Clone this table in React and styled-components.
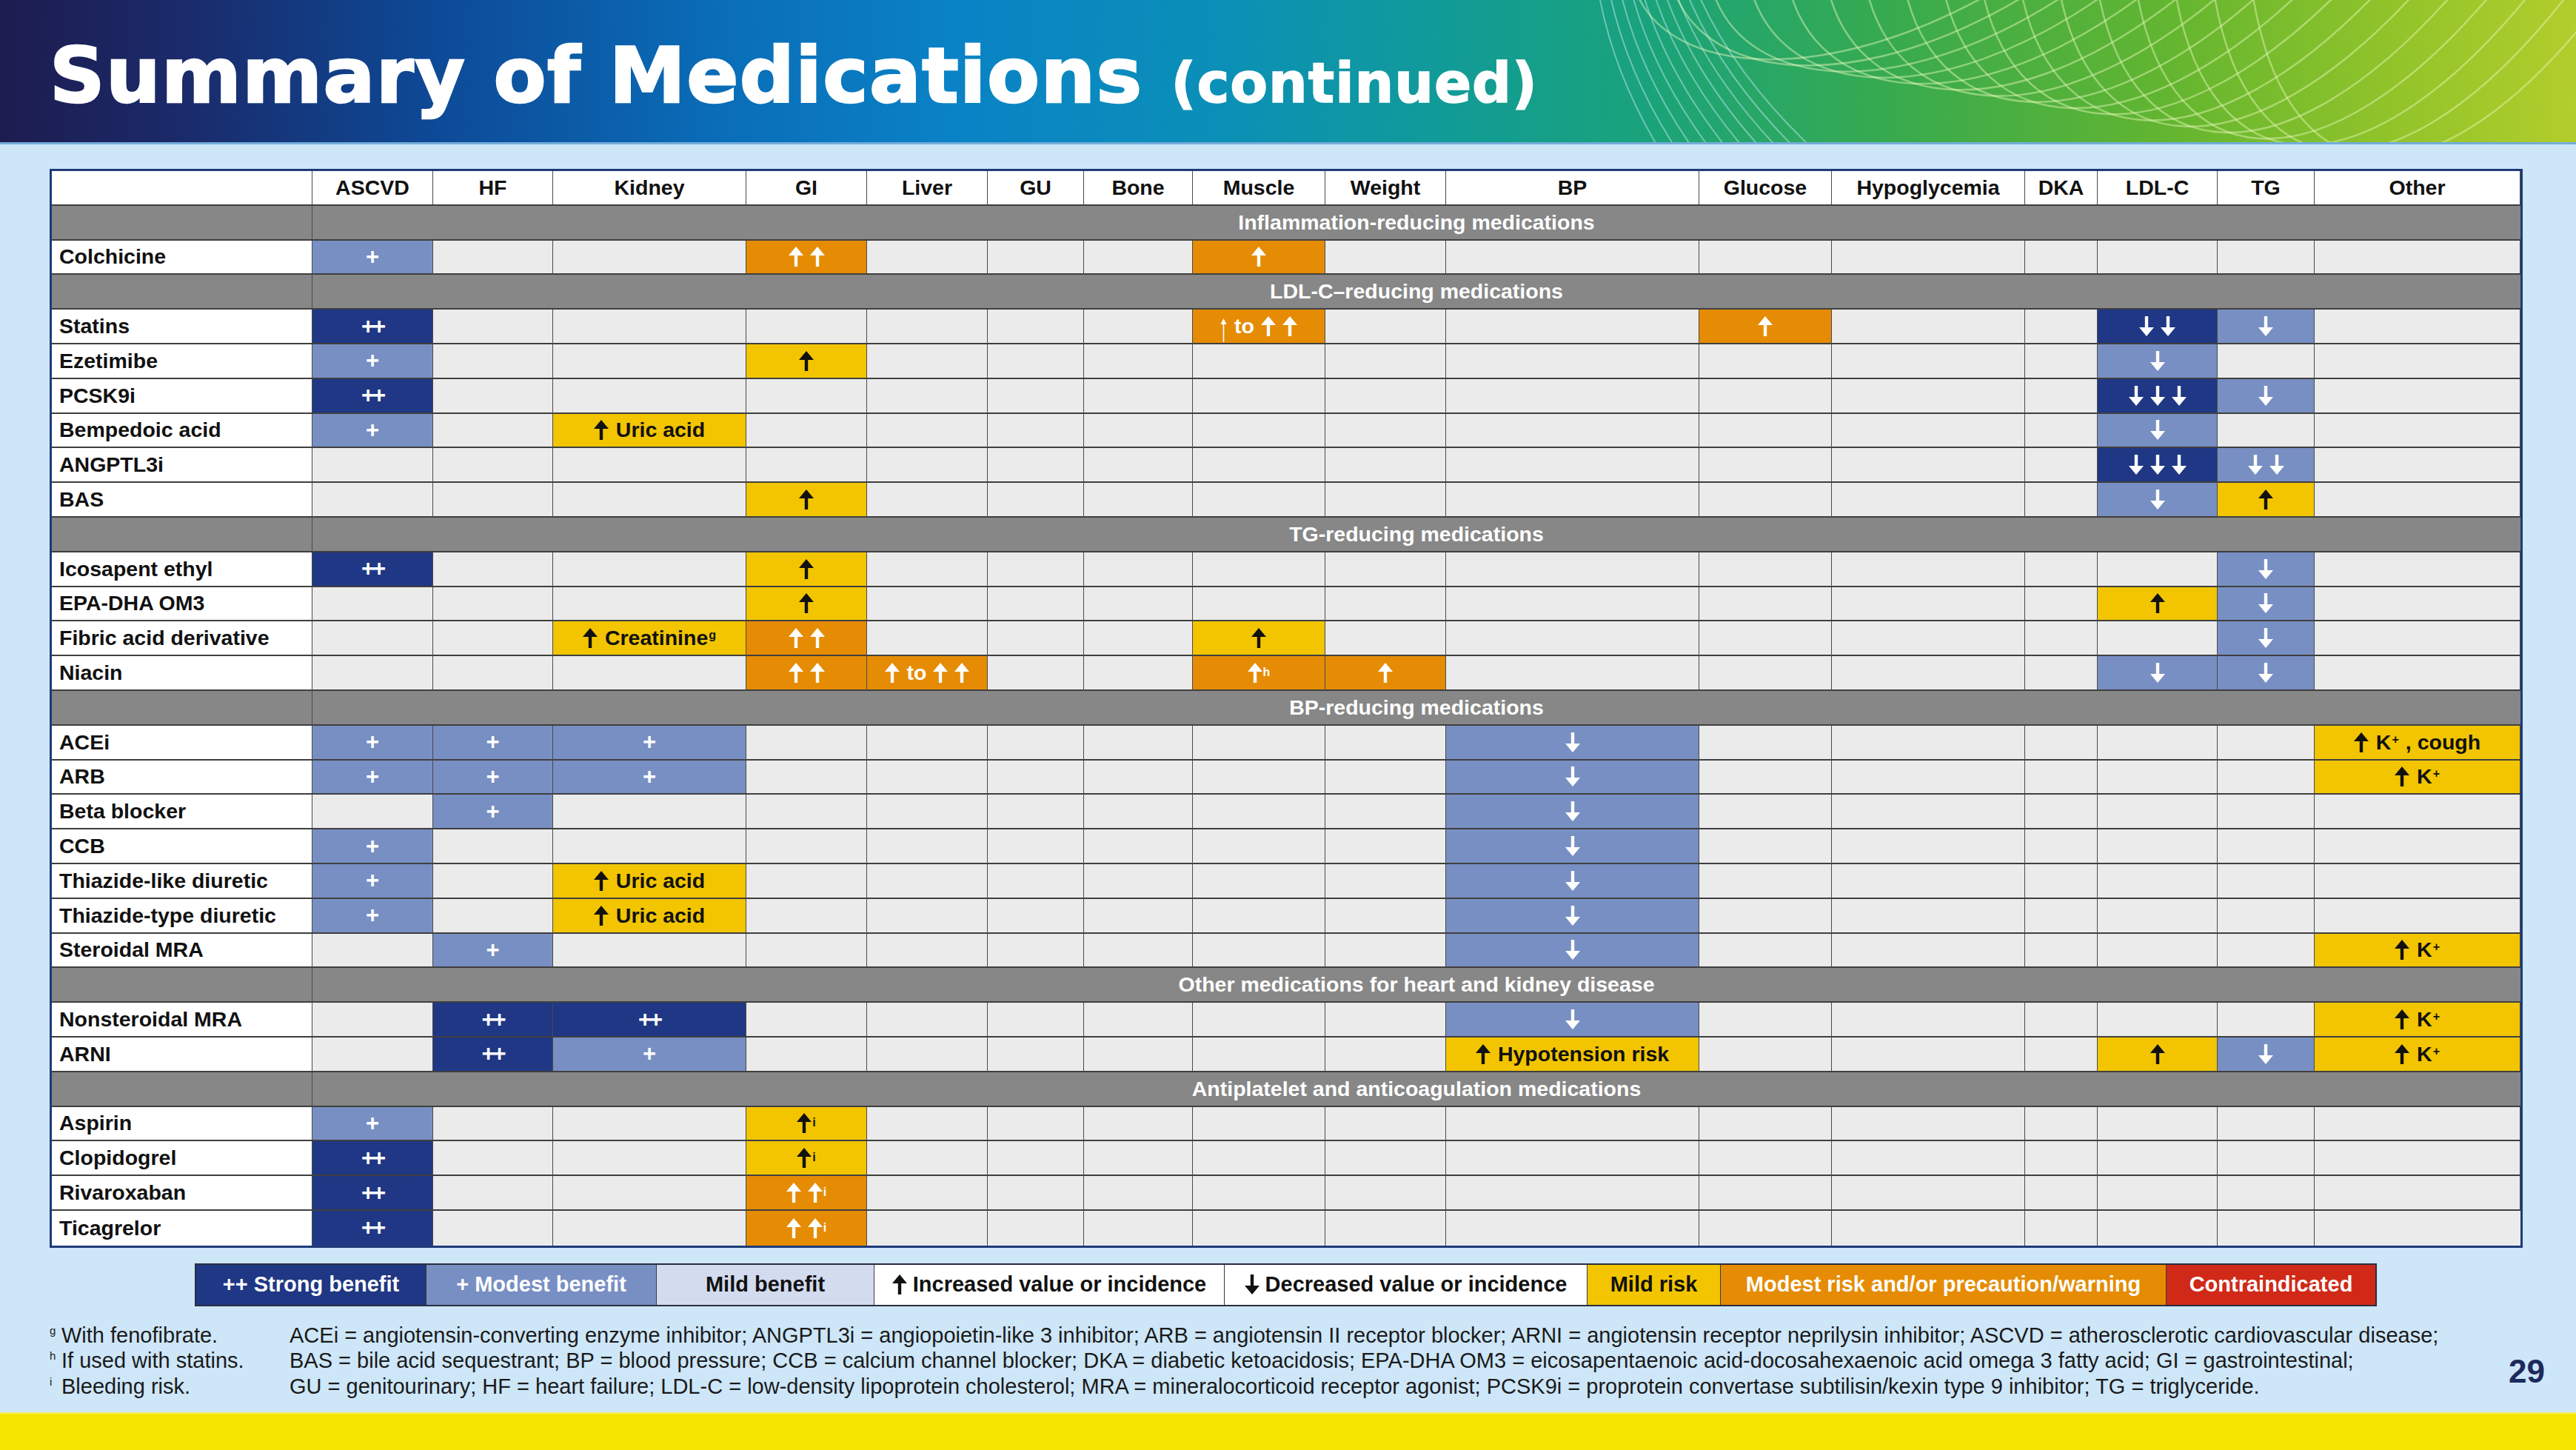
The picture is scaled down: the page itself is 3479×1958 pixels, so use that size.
import React from 'react';
import styled, { createGlobalStyle } from 'styled-components';

const GlobalStyle = createGlobalStyle`
  html, body {
    margin: 0;
    padding: 0;
  }
  body {
    background: #cde6f8;
    font-family: 'Liberation Sans', Arial, sans-serif;
  }
`;

const TONES = {
  S: { bg: '#1f3784', fg: '#ffffff' },
  M: { bg: '#788fc3', fg: '#ffffff' },
  L: { bg: '#d3dbef', fg: '#111111' },
  W: { bg: '#ffffff', fg: '#111111' },
  Y: { bg: '#f2c500', fg: '#111111' },
  O: { bg: '#e58c04', fg: '#ffffff' },
  R: { bg: '#d02918', fg: '#ffffff' },
};

const COLS = [
  { key: 'ascvd', label: 'ASCVD', w: 163 },
  { key: 'hf', label: 'HF', w: 162 },
  { key: 'kidney', label: 'Kidney', w: 261 },
  { key: 'gi', label: 'GI', w: 163 },
  { key: 'liver', label: 'Liver', w: 163 },
  { key: 'gu', label: 'GU', w: 130 },
  { key: 'bone', label: 'Bone', w: 147 },
  { key: 'muscle', label: 'Muscle', w: 179 },
  { key: 'weight', label: 'Weight', w: 163 },
  { key: 'bp', label: 'BP', w: 342 },
  { key: 'glucose', label: 'Glucose', w: 179 },
  { key: 'hypo', label: 'Hypoglycemia', w: 261 },
  { key: 'dka', label: 'DKA', w: 98 },
  { key: 'ldl', label: 'LDL-C', w: 162 },
  { key: 'tg', label: 'TG', w: 131 },
  { key: 'other', label: 'Other', w: 278 },
];

const up = { a: 'up' };
const dn = { a: 'down' };
const thin = { a: 'thin' };
const sup = (s) => ({ sup: s });
const c = (t, ...parts) => ({ t, parts });

const ROWS = [
  { section: 'Inflammation-reducing medications' },
  { name: 'Colchicine', cells: { ascvd: c('M', '+'), gi: c('O', up, up), muscle: c('O', up) } },
  { section: 'LDL-C–reducing medications' },
  {
    name: 'Statins',
    cells: {
      ascvd: c('S', '++'),
      muscle: c('O', thin, 'to', up, up),
      glucose: c('O', up),
      ldl: c('S', dn, dn),
      tg: c('M', dn),
    },
  },
  { name: 'Ezetimibe', cells: { ascvd: c('M', '+'), gi: c('Y', up), ldl: c('M', dn) } },
  { name: 'PCSK9i', cells: { ascvd: c('S', '++'), ldl: c('S', dn, dn, dn), tg: c('M', dn) } },
  { name: 'Bempedoic acid', cells: { ascvd: c('M', '+'), kidney: c('Y', up, 'Uric acid'), ldl: c('M', dn) } },
  { name: 'ANGPTL3i', cells: { ldl: c('S', dn, dn, dn), tg: c('M', dn, dn) } },
  { name: 'BAS', cells: { gi: c('Y', up), ldl: c('M', dn), tg: c('Y', up) } },
  { section: 'TG-reducing medications' },
  { name: 'Icosapent ethyl', cells: { ascvd: c('S', '++'), gi: c('Y', up), tg: c('M', dn) } },
  { name: 'EPA-DHA OM3', cells: { gi: c('Y', up), ldl: c('Y', up), tg: c('M', dn) } },
  {
    name: 'Fibric acid derivative',
    cells: { kidney: c('Y', up, 'Creatinine', sup('g')), gi: c('O', up, up), muscle: c('Y', up), tg: c('M', dn) },
  },
  {
    name: 'Niacin',
    cells: {
      gi: c('O', up, up),
      liver: c('O', up, 'to', up, up),
      muscle: c('O', up, sup('h')),
      weight: c('O', up),
      ldl: c('M', dn),
      tg: c('M', dn),
    },
  },
  { section: 'BP-reducing medications' },
  {
    name: 'ACEi',
    cells: {
      ascvd: c('M', '+'),
      hf: c('M', '+'),
      kidney: c('M', '+'),
      bp: c('M', dn),
      other: c('Y', up, 'K', sup('+'), ', cough'),
    },
  },
  {
    name: 'ARB',
    cells: {
      ascvd: c('M', '+'),
      hf: c('M', '+'),
      kidney: c('M', '+'),
      bp: c('M', dn),
      other: c('Y', up, 'K', sup('+')),
    },
  },
  { name: 'Beta blocker', cells: { hf: c('M', '+'), bp: c('M', dn) } },
  { name: 'CCB', cells: { ascvd: c('M', '+'), bp: c('M', dn) } },
  { name: 'Thiazide-like diuretic', cells: { ascvd: c('M', '+'), kidney: c('Y', up, 'Uric acid'), bp: c('M', dn) } },
  { name: 'Thiazide-type diuretic', cells: { ascvd: c('M', '+'), kidney: c('Y', up, 'Uric acid'), bp: c('M', dn) } },
  { name: 'Steroidal MRA', cells: { hf: c('M', '+'), bp: c('M', dn), other: c('Y', up, 'K', sup('+')) } },
  { section: 'Other medications for heart and kidney disease' },
  {
    name: 'Nonsteroidal MRA',
    cells: { hf: c('S', '++'), kidney: c('S', '++'), bp: c('M', dn), other: c('Y', up, 'K', sup('+')) },
  },
  {
    name: 'ARNI',
    cells: {
      hf: c('S', '++'),
      kidney: c('M', '+'),
      bp: c('Y', up, 'Hypotension risk'),
      ldl: c('Y', up),
      tg: c('M', dn),
      other: c('Y', up, 'K', sup('+')),
    },
  },
  { section: 'Antiplatelet and anticoagulation medications' },
  { name: 'Aspirin', cells: { ascvd: c('M', '+'), gi: c('Y', up, sup('i')) } },
  { name: 'Clopidogrel', cells: { ascvd: c('S', '++'), gi: c('Y', up, sup('i')) } },
  { name: 'Rivaroxaban', cells: { ascvd: c('S', '++'), gi: c('O', up, up, sup('i')) } },
  { name: 'Ticagrelor', cells: { ascvd: c('S', '++'), gi: c('O', up, up, sup('i')) } },
];

const LEGEND = [
  { tone: 'S', w: 310, label: '++ Strong benefit' },
  { tone: 'M', w: 310, label: '+ Modest benefit' },
  { tone: 'L', w: 293, label: 'Mild benefit' },
  { tone: 'W', w: 472, label: 'Increased value or incidence', arrow: 'up' },
  { tone: 'W', w: 489, label: 'Decreased value or incidence', arrow: 'down' },
  { tone: 'Y', w: 179, label: 'Mild risk' },
  { tone: 'O', w: 601, label: 'Modest risk and/or precaution/warning' },
  { tone: 'R', w: 282, label: 'Contraindicated' },
];

const NOTES = [
  { mark: 'g', text: 'With fenofibrate.' },
  { mark: 'h', text: 'If used with statins.' },
  { mark: 'i', text: 'Bleeding risk.' },
];

const ABBREVIATIONS = [
  'ACEi = angiotensin-converting enzyme inhibitor; ANGPTL3i = angiopoietin-like 3 inhibitor; ARB = angiotensin II receptor blocker; ARNI = angiotensin receptor neprilysin inhibitor; ASCVD = atherosclerotic cardiovascular disease;',
  'BAS = bile acid sequestrant; BP = blood pressure; CCB = calcium channel blocker; DKA = diabetic ketoacidosis; EPA-DHA OM3 = eicosapentaenoic acid-docosahexaenoic acid omega 3 fatty acid; GI = gastrointestinal;',
  'GU = genitourinary; HF = heart failure; LDL-C = low-density lipoprotein cholesterol; MRA = mineralocorticoid receptor agonist; PCSK9i = proprotein convertase subtilisin/kexin type 9 inhibitor; TG = triglyceride.',
];

const Page = styled.div`
  width: 3479px;
  height: 1958px;
  display: flex;
  flex-direction: column;
  background: #cde6f8;
  overflow: hidden;
`;

const Header = styled.header`
  position: relative;
  height: 195px;
  flex-shrink: 0;
  display: flex;
  align-items: baseline;
  padding: 50px 0 0 67px;
  box-sizing: border-box;
  border-bottom: 3px solid #74acd9;
  background: linear-gradient(
    90deg,
    #1d1c4f 0%,
    #1b2a6a 7%,
    #0d4a97 17%,
    #0a6db8 28%,
    #0a82c6 37%,
    #0b8fb8 47%,
    #119b98 56%,
    #1aa37a 64%,
    #3aab4c 74%,
    #62b530 84%,
    #92c42a 93%,
    #b2cd2c 100%
  );
  overflow: hidden;
`;

const Waves = styled.svg`
  position: absolute;
  top: 0;
  left: 2060px;
  width: 1419px;
  height: 195px;
  pointer-events: none;
`;

const Title = styled.h1`
  position: relative;
  margin: 0;
  font-family: 'DejaVu Sans', 'Liberation Sans', sans-serif;
  font-weight: 700;
  font-size: 103.5px;
  line-height: 104px;
  letter-spacing: 1.4px;
  color: #ffffff;
  -webkit-text-stroke: 2.5px #ffffff;
  white-space: nowrap;
`;

const Continued = styled.span`
  margin-left: 38px;
  font-size: 74px;
  letter-spacing: 1px;
  -webkit-text-stroke: 1.5px #ffffff;
`;

const Main = styled.main`
  flex: 1;
  display: flex;
  flex-direction: column;
  padding: 33px 72px 0 67px;
`;

const Table = styled.div`
  width: 3340px;
  box-sizing: border-box;
  border: 3px solid #1f3a7a;
  display: grid;
  grid-template-columns: ${(p) => p.$cols};
  grid-auto-rows: 46.8px;
  background: #ebebeb;
`;

const CellBase = styled.div`
  box-sizing: border-box;
  display: flex;
  align-items: center;
  justify-content: center;
  border-right: 1px solid #4a4a4a;
  border-bottom: ${(p) => (p.$last ? '0' : '2px solid #3f3f3f')};
  font-weight: 700;
  font-size: 28.5px;
  white-space: nowrap;
  &:last-child {
    border-right: 0;
  }
`;

const HeadCell = styled(CellBase)`
  background: #ffffff;
  color: #111111;
`;

const NameCell = styled(CellBase)`
  justify-content: flex-start;
  padding-left: 10px;
  background: #ffffff;
  color: #111111;
`;

const SectionSide = styled(CellBase)`
  background: #878787;
`;

const SectionCell = styled(CellBase)`
  grid-column: 2 / -1;
  background: #878787;
  color: #ffffff;
  border-right: 0;
`;

const DataCell = styled(CellBase)`
  background: ${(p) => (p.$tone ? TONES[p.$tone].bg : '#ebebeb')};
  color: ${(p) => (p.$tone ? TONES[p.$tone].fg : '#111111')};
`;

const Content = styled.span`
  display: inline-flex;
  align-items: center;
  gap: 9px;
`;

const Word = styled.span`
  margin-left: ${(p) => (p.$afterArrow ? '1px' : '0')};
  letter-spacing: ${(p) => (p.$tight ? '-3px' : '0')};
  font-size: ${(p) => (p.$big ? '31px' : 'inherit')};
`;

const Sup = styled.sup`
  align-self: flex-start;
  margin-left: -8px;
  margin-top: 5px;
  font-size: 16px;
  font-weight: 700;
  line-height: 1;
  vertical-align: baseline;
`;

const ArrowSvg = styled.svg`
  display: block;
  flex-shrink: 0;
`;

const Arrow = ({ dir, color }) => {
  if (dir === 'thin') {
    return (
      <ArrowSvg width="9" height="32" viewBox="0 0 9 32" style={{ marginTop: 10 }}>
        <path d="M4.5 0 L8.5 8 L5.3 8 L5.3 32 L3.7 32 L3.7 8 L0.5 8 Z" fill={color} />
      </ArrowSvg>
    );
  }
  const d =
    dir === 'up'
      ? 'M10 0 L20 12 L12.2 12 L12.2 27 L7.8 27 L7.8 12 L0 12 Z'
      : 'M10 27 L20 15 L12.2 15 L12.2 0 L7.8 0 L7.8 15 L0 15 Z';
  return (
    <ArrowSvg width="20" height="27" viewBox="0 0 20 27">
      <path d={d} fill={color} />
    </ArrowSvg>
  );
};

const CellContent = ({ cell }) => {
  const color = TONES[cell.t].fg;
  return (
    <Content>
      {cell.parts.map((p, i) => {
        const prev = cell.parts[i - 1];
        if (typeof p === 'string') {
          return (
            <Word
              key={i}
              $afterArrow={prev && prev.a}
              $tight={p === '++'}
              $big={p === '+' || p === '++'}
            >
              {p}
            </Word>
          );
        }
        if (p.sup) return <Sup key={i}>{p.sup}</Sup>;
        return <Arrow key={i} dir={p.a} color={color} />;
      })}
    </Content>
  );
};

const Legend = styled.div`
  display: flex;
  align-self: flex-start;
  margin: 21px 0 0 196px;
  height: 58px;
  border: 2px solid #2b2d3f;
  box-sizing: border-box;
`;

const LegendItem = styled.div`
  width: ${(p) => p.$w}px;
  display: flex;
  align-items: center;
  justify-content: center;
  gap: 8px;
  background: ${(p) => TONES[p.$tone].bg};
  color: ${(p) => TONES[p.$tone].fg};
  border-right: 1px solid #3a3a3a;
  font-weight: 700;
  font-size: 29px;
  white-space: nowrap;
  &:last-child {
    border-right: 0;
  }
`;

const Notes = styled.div`
  display: flex;
  align-items: center;
  margin-top: 22px;
  color: #1a1a1a;
  font-size: 29px;
  line-height: 34.5px;
`;

const NoteList = styled.div`
  width: 324px;
  flex-shrink: 0;
`;

const NoteLine = styled.div`
  display: flex;
  white-space: nowrap;
`;

const NoteMark = styled.span`
  width: 16px;
  font-size: 15px;
  line-height: 22px;
`;

const Abbrev = styled.div`
  flex: 1;
  white-space: nowrap;
`;

const PageNum = styled.div`
  margin: 30px -30px 0 0;
  font-weight: 700;
  font-size: 44px;
  color: #1d2a5c;
`;

const Footer = styled.footer`
  height: 51px;
  flex-shrink: 0;
  background: #f6e500;
  border-top: 2px solid #f1ec6a;
  box-sizing: border-box;
`;

// nested U-shaped curves drifting to the right, as in the header artwork
const wavePaths = Array.from({ length: 17 }, (_, i) => {
  const x = 150 + i * 52;
  const depth = 30 + i * 11;
  return `M${x} -10 C${x + 45} ${depth + 70} ${x + 250} ${depth + 90} ${x + 480} -10`;
});

const slantPaths = Array.from({ length: 10 }, (_, i) => {
  const x = 100 + i * 15;
  return `M${x} -5 Q${x + 20 + i * 3} 100 ${x + 80 + i * 8} 200`;
});

export default function App() {
  const cols = ['352px', ...COLS.map((col) => `${col.w}px`)].join(' ');
  const lastIndex = ROWS.length - 1;

  return (
    <>
      <GlobalStyle />
      <Page>
        <Header>
          <Waves viewBox="0 0 1419 195" preserveAspectRatio="none">
            {slantPaths.map((d, i) => (
              <path key={`s${i}`} d={d} stroke="rgba(210,240,255,0.45)" strokeWidth="2" fill="none" />
            ))}
            {wavePaths.map((d, i) => (
              <path key={`w${i}`} d={d} stroke="rgba(235,250,190,0.45)" strokeWidth="2.5" fill="none" />
            ))}
          </Waves>
          <Title>
            Summary of Medications<Continued>(continued)</Continued>
          </Title>
        </Header>

        <Main>
          <Table $cols={cols}>
            <HeadCell />
            {COLS.map((col) => (
              <HeadCell key={col.key}>{col.label}</HeadCell>
            ))}
            {ROWS.map((row, r) => {
              const last = r === lastIndex;
              if (row.section) {
                return (
                  <React.Fragment key={row.section}>
                    <SectionSide $last={last} />
                    <SectionCell $last={last}>{row.section}</SectionCell>
                  </React.Fragment>
                );
              }
              return (
                <React.Fragment key={row.name}>
                  <NameCell $last={last}>{row.name}</NameCell>
                  {COLS.map((col) => {
                    const cell = row.cells[col.key];
                    return (
                      <DataCell key={col.key} $tone={cell && cell.t} $last={last}>
                        {cell && <CellContent cell={cell} />}
                      </DataCell>
                    );
                  })}
                </React.Fragment>
              );
            })}
          </Table>

          <Legend>
            {LEGEND.map((item) => (
              <LegendItem key={item.label} $tone={item.tone} $w={item.w}>
                {item.arrow && <Arrow dir={item.arrow} color="#111111" />}
                {item.label}
              </LegendItem>
            ))}
          </Legend>

          <Notes>
            <NoteList>
              {NOTES.map((n) => (
                <NoteLine key={n.mark}>
                  <NoteMark>{n.mark}</NoteMark>
                  {n.text}
                </NoteLine>
              ))}
            </NoteList>
            <Abbrev>
              {ABBREVIATIONS.map((line) => (
                <div key={line.slice(0, 8)}>{line}</div>
              ))}
            </Abbrev>
            <PageNum>29</PageNum>
          </Notes>
        </Main>

        <Footer />
      </Page>
    </>
  );
}
